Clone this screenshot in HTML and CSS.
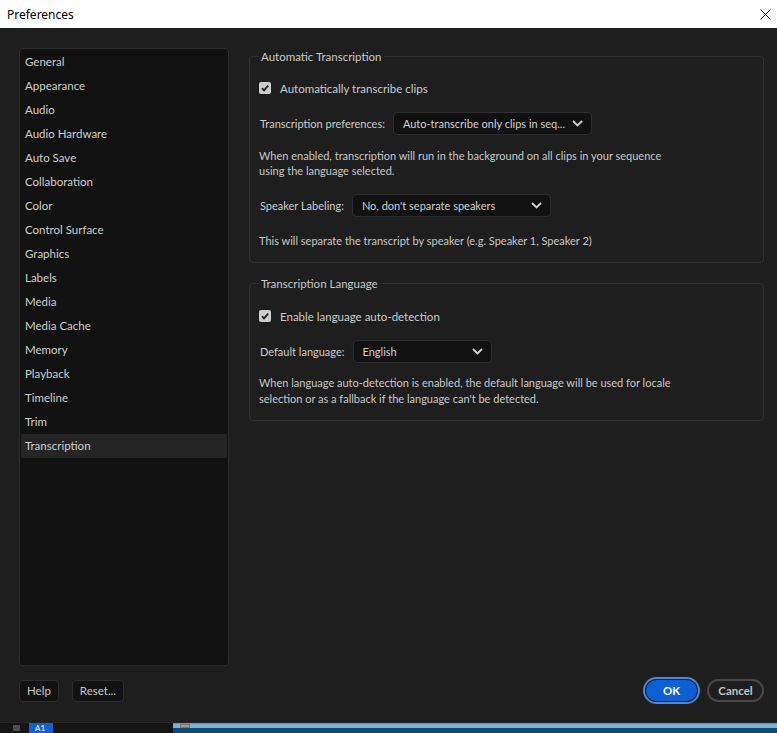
FILE: index.html
```html
<!DOCTYPE html>
<html lang="en">
<head>
<meta charset="UTF-8">
<title>Preferences</title>
<link rel="stylesheet" href="styles.css">
</head>
<body>
<div class="titlebar">
    <span class="title">Preferences</span>
    <svg class="close" width="11" height="11" viewBox="0 0 11 11"><path d="M0.5 0.5L10.5 10.5M10.5 0.5L0.5 10.5" stroke="#000" stroke-width="1" fill="none"/></svg>
</div>

<div class="dialog">
    <div class="main">
        <ul class="nav">
            <li>General</li>
            <li>Appearance</li>
            <li>Audio</li>
            <li>Audio Hardware</li>
            <li>Auto Save</li>
            <li>Collaboration</li>
            <li>Color</li>
            <li>Control Surface</li>
            <li>Graphics</li>
            <li>Labels</li>
            <li>Media</li>
            <li>Media Cache</li>
            <li>Memory</li>
            <li>Playback</li>
            <li>Timeline</li>
            <li>Trim</li>
            <li class="selected">Transcription</li>
        </ul>

        <div class="panel">
            <fieldset class="group group-auto">
                <legend>Automatic Transcription</legend>
                <div class="check-row">
                    <span class="checkbox"><svg width="12" height="12" viewBox="0 0 12 12"><path d="M3 6.2L5 8.3L9.2 3.6" stroke="#1e1e1e" stroke-width="1.8" fill="none"/></svg></span>
                    <span>Automatically transcribe clips</span>
                </div>
                <div class="select-row">
                    <span>Transcription preferences:</span>
                    <div class="select wide">
                        <span>Auto-transcribe only clips in seq...</span>
                        <svg class="chevron" width="11" height="7" viewBox="0 0 11 7"><path d="M1 1L5.5 5.5L10 1" stroke="#d0d0d0" stroke-width="1.8" fill="none"/></svg>
                    </div>
                </div>
                <p class="note">When enabled, transcription will run in the background on all clips in your sequence<br>using the language selected.</p>
                <div class="select-row">
                    <span>Speaker Labeling:</span>
                    <div class="select wide">
                        <span>No, don't separate speakers</span>
                        <svg class="chevron" width="11" height="7" viewBox="0 0 11 7"><path d="M1 1L5.5 5.5L10 1" stroke="#d0d0d0" stroke-width="1.8" fill="none"/></svg>
                    </div>
                </div>
                <p class="note note-last">This will separate the transcript by speaker (e.g. Speaker 1, Speaker 2)</p>
            </fieldset>

            <fieldset class="group group-lang">
                <legend>Transcription Language</legend>
                <div class="check-row">
                    <span class="checkbox"><svg width="12" height="12" viewBox="0 0 12 12"><path d="M3 6.2L5 8.3L9.2 3.6" stroke="#1e1e1e" stroke-width="1.8" fill="none"/></svg></span>
                    <span>Enable language auto-detection</span>
                </div>
                <div class="select-row">
                    <span>Default language:</span>
                    <div class="select narrow">
                        <span>English</span>
                        <svg class="chevron" width="11" height="7" viewBox="0 0 11 7"><path d="M1 1L5.5 5.5L10 1" stroke="#d0d0d0" stroke-width="1.8" fill="none"/></svg>
                    </div>
                </div>
                <p class="note note-lang">When language auto-detection is enabled, the default language will be used for locale<br>selection or as a fallback if the language can't be detected.</p>
            </fieldset>
        </div>
    </div>

    <div class="footer">
        <div class="footer-left">
            <button class="btn">Help</button>
            <button class="btn">Reset...</button>
        </div>
        <div class="footer-right">
            <button class="btn-ok">OK</button>
            <button class="btn-cancel">Cancel</button>
        </div>
    </div>
</div>

<div class="taskstrip">
    <span class="strip-square"></span>
    <span class="strip-tag">A1</span>
    <div class="strip-track">
        <span class="strip-handle"></span>
    </div>
</div>
</body>
</html>
```

FILE: styles.css
```css
* {
    box-sizing: border-box;
}

body {
    margin: 0;
    width: 777px;
    height: 733px;
    overflow: hidden;
    background-color: #1e1e1e;
    font-family: "Lato", "Liberation Sans", sans-serif;
    font-size: 11px;
    color: #cccccc;
}

.titlebar {
    height: 28px;
    background-color: #ffffff;
    display: flex;
    align-items: center;
    justify-content: space-between;
    padding: 0 3px 0 7px;
}

.title {
    font-family: "Noto Sans", "Liberation Sans", sans-serif;
    font-size: 12px;
    color: #000;
}

.close {
    margin-right: 3px;
}

.dialog {
    height: 694px;
    padding: 20px 13px 0 19px;
}

.main {
    display: flex;
    gap: 20px;
    height: 618px;
}

.nav {
    list-style: none;
    margin: 0;
    padding: 1px;
    width: 210px;
    background-color: #111111;
    border: 1px solid #2c2c2c;
    border-radius: 4px;
}

.nav li {
    height: 24px;
    line-height: 24px;
    padding-left: 4px;
    font-size: 11.5px;
    color: #cfcfcf;
}

.nav li.selected {
    background-color: #252525;
}

.panel {
    flex: 1;
    padding-top: 1px;
}

.group {
    margin: 0;
    padding: 0 9px;
    border: 1px solid #303030;
    border-radius: 4px;
}

.group legend {
    padding: 0 2px;
    line-height: 15px;
    font-size: 11.5px;
    color: #c8c8c8;
}

.group-auto {
    padding-bottom: 14px;
}

.group-lang {
    margin-top: 13px;
    padding-bottom: 13px;
}

.check-row {
    display: flex;
    align-items: center;
    gap: 9px;
    height: 16px;
    margin-top: 16px;
    font-size: 11.5px;
}

.group-lang .check-row {
    margin-top: 17px;
}

.checkbox {
    width: 12px;
    height: 12px;
    border-radius: 2px;
    background-color: #cdcdcd;
    display: flex;
}

.select-row {
    display: flex;
    align-items: center;
    gap: 8px;
    margin-top: 16px;
    padding-left: 1px;
    white-space: nowrap;
}

.select {
    height: 23px;
    display: flex;
    align-items: center;
    justify-content: space-between;
    padding: 0 8px 0 9px;
    background-color: #111111;
    border: 1px solid #2e2e2e;
    border-radius: 4px;
    color: #d0d0d0;
}

.select.wide {
    width: 199px;
}

.select.narrow {
    width: 139px;
}

.note {
    margin: 13px 0 0;
    line-height: 15px;
    color: #c8c8c8;
}

.note-last {
    margin-top: 16px;
}

.note-lang {
    line-height: 16px;
    margin-top: 12px;
}

.footer {
    display: flex;
    justify-content: space-between;
    align-items: center;
    margin-top: 11px;
    height: 27px;
}

.footer-left,
.footer-right {
    display: flex;
    align-items: center;
}

.footer-left {
    gap: 13px;
}

.footer-right {
    gap: 7px;
}

.btn {
    height: 22px;
    padding: 0 7px;
    background-color: #121212;
    border: 1px solid #2e2e2e;
    border-radius: 4px;
    font-family: inherit;
    font-size: 11.5px;
    color: #c8c8c8;
}

.btn-ok {
    width: 51px;
    height: 21px;
    margin: 0 3px;
    border: none;
    border-radius: 11px;
    background-color: #0d60d2;
    box-shadow: 0 0 0 1px #1e1e1e, 0 0 0 3px #4c87d6;
    font-family: inherit;
    font-size: 11.5px;
    font-weight: bold;
    color: #ffffff;
}

.btn-cancel {
    width: 57px;
    height: 23px;
    border: 2px solid #474747;
    border-radius: 12px;
    background: transparent;
    font-family: inherit;
    font-size: 11.5px;
    font-weight: bold;
    color: #c4c4c4;
}

.taskstrip {
    height: 11px;
    display: flex;
    align-items: stretch;
    background-color: #151515;
    border-top: 1px solid #262626;
}

.strip-square {
    width: 7px;
    height: 6px;
    margin: 2px 0 0 13px;
    background-color: #4e4e4e;
}

.strip-tag {
    width: 24px;
    margin-left: 9px;
    background-color: #1560c8;
    color: #fff;
    font-size: 8px;
    line-height: 10px;
    padding-left: 6px;
}

.strip-track {
    flex: 1;
    margin-left: 120px;
    position: relative;
    border-top: 1px solid #8a8a8a;
    background: linear-gradient(#7cb2d3 0, #7cb2d3 4px, #0d4c70 4px);
}

.strip-handle {
    position: absolute;
    left: 7px;
    top: 0;
    width: 10px;
    height: 4px;
    border: 1px solid #777;
    background-color: #9a9a9a;
}
```
